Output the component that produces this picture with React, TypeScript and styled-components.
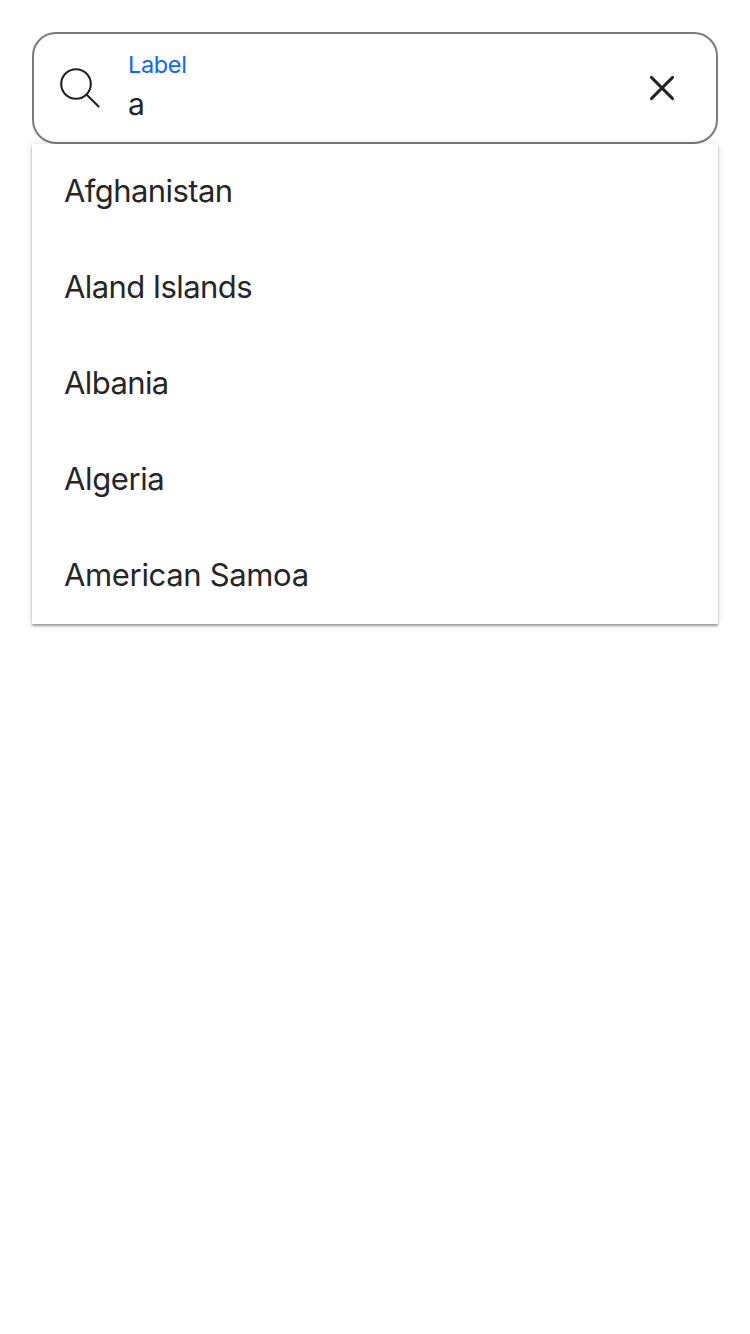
import React from 'react';
import styled, { createGlobalStyle } from 'styled-components';

const GlobalStyle = createGlobalStyle`
  * { box-sizing: border-box; }
  body { margin: 0; background: #fff; font-family: Inter, "Liberation Sans", sans-serif; font-weight: 400; color: #262626; }
`;

const Page = styled.main`
  padding: 32px;
  min-height: 1334px;
`;

const Field = styled.div`
  display: flex;
  align-items: center;
  height: 112px;
  padding: 0 30px 0 22px;
  border: 2px solid #7e7975;
  border-radius: 24px;
`;

const Icon = styled.svg`
  display: block;
  flex: none;
  width: 48px;
  height: 48px;
  fill: none;
  stroke: #222;
`;

const Entry = styled.div`
  display: flex;
  flex-direction: column;
  flex: 1;
  padding: 1px 0 0 24px;
`;

const Label = styled.label`
  font-size: 23.5px;
  line-height: 32px;
  letter-spacing: -0.35px;
  color: #0b68ee;
`;

const Value = styled.input`
  width: 100%;
  height: 47px;
  padding: 0;
  border: 0;
  outline: 0;
  background: transparent;
  color: inherit;
  font: 400 30px/47px Inter, "Liberation Sans", sans-serif;
`;

const ClearButton = styled.button`
  padding: 0;
  border: 0;
  background: transparent;
`;

const Options = styled.ul`
  margin: 0;
  padding: 0;
  list-style: none;
  background: #fff;
  box-shadow: 0 2px 2px rgba(0, 0, 0, 0.34), 0 0 8px rgba(0, 0, 0, 0.12);
`;

const Option = styled.li`
  display: flex;
  align-items: center;
  height: 96px;
  padding: 0 32px 2px;
  font-size: 31px;
  line-height: 48px;
`;

const OptionText = styled.span<{ $tracking: number }>`
  letter-spacing: ${(p) => p.$tracking}px;
`;

const countries = [
  { name: 'Afghanistan', tracking: -0.58 },
  { name: 'Aland Islands', tracking: -0.58 },
  { name: 'Albania', tracking: -0.6 },
  { name: 'Algeria', tracking: -0.38 },
  { name: 'American Samoa', tracking: -0.34 },
];

export default function App() {
  return (
    <>
      <GlobalStyle />
      <Page>
        <Field>
          <Icon viewBox="0 0 48 48" strokeWidth="2.1" strokeLinecap="round">
            <circle cx="20" cy="20" r="14.8" />
            <path d="M30.5 30.5 42.6 42.4" />
          </Icon>
          <Entry>
            <Label htmlFor="country">Label</Label>
            <Value id="country" defaultValue="a" />
          </Entry>
          <ClearButton aria-label="Clear">
            <Icon viewBox="0 0 48 48" strokeWidth="2.9" strokeLinecap="round">
              <path d="m13.4 13.4 21.2 21.2M34.6 13.4 13.4 34.6" />
            </Icon>
          </ClearButton>
        </Field>
        <Options>
          {countries.map((c) => (
            <Option key={c.name}>
              <OptionText $tracking={c.tracking}>{c.name}</OptionText>
            </Option>
          ))}
        </Options>
      </Page>
    </>
  );
}
